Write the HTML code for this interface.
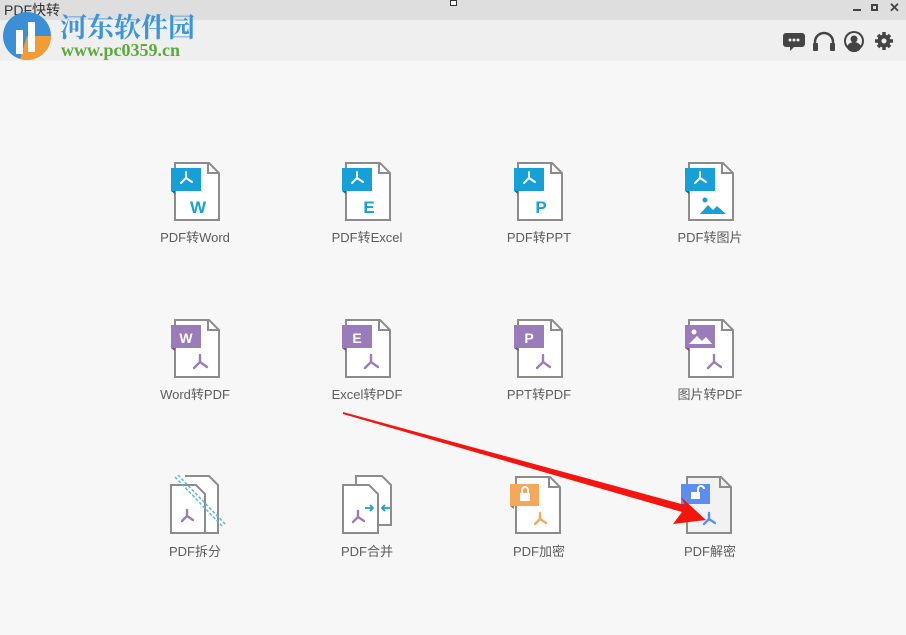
<!DOCTYPE html>
<html><head><meta charset="utf-8"><style>
body{margin:0;width:906px;height:635px;overflow:hidden;background:#f7f7f7;font-family:"Liberation Sans","Noto Sans CJK SC",sans-serif;position:relative}
.tb{position:absolute;left:0;top:0;width:906px;height:20px;background:#dedede}
.tool{position:absolute;left:0;top:20px;width:906px;height:41px;background:#efefef}
.it{position:absolute;width:60px;height:62px}
.lb{position:absolute;width:120px;text-align:center;font-size:13px;color:#5c5c5c}
</style></head><body>
<div class="tb"></div>
<div class="tool"></div>
<div style="position:absolute;left:4px;top:0;font-size:14px;color:#333">PDF快转</div>
<svg style="position:absolute;left:0;top:8px" width="60" height="55"><circle cx="27" cy="28" r="24" fill="#3a8fd6"/><path d="M27 28 L51 28 A24 24 0 0 1 20 51 Z" fill="#f39b35"/><rect x="16" y="22" width="7" height="24" fill="#fff"/><rect x="28" y="14" width="7" height="30" fill="#fff"/></svg>
<div style="position:absolute;left:60px;top:6px;font-size:27px;font-weight:bold;color:#3b95dc;font-family:'Liberation Serif','Noto Serif CJK SC',serif;letter-spacing:0px">河东软件园</div>
<div style="position:absolute;left:61px;top:40px;font-size:18px;font-weight:bold;color:#5aab3a;font-family:'Liberation Serif',serif">www.pc0359.cn</div>
<div style="position:absolute;left:853px;top:4px;width:8px;height:2px;background:#444;margin-top:5px"></div>
<div style="position:absolute;left:871px;top:4px;width:7px;height:7px;border:2px solid #444;box-sizing:border-box"></div>
<div style="position:absolute;left:889px;top:0;font-size:13px;font-weight:bold;color:#444">✕</div>
<div style="position:absolute;left:450px;top:0;width:5px;height:4px;border:1px solid #333;background:#fff"></div>
<svg style="position:absolute;left:783px;top:30px" width="112" height="24" fill="#444">
<path d="M3 3 h16 a3 3 0 0 1 3 3 v8 a3 3 0 0 1 -3 3 h-8 l-4 4 v-4 h-4 a3 3 0 0 1 -3 -3 v-8 a3 3 0 0 1 3 -3z"/>
<circle cx="7" cy="10" r="1.5" fill="#efefef"/><circle cx="11" cy="10" r="1.5" fill="#efefef"/><circle cx="15" cy="10" r="1.5" fill="#efefef"/>
<path d="M32 19 v-7 a9 9 0 0 1 18 0 v7" fill="none" stroke="#444" stroke-width="2.5"/><rect x="30" y="13" width="5" height="8" rx="1"/><rect x="47" y="13" width="5" height="8" rx="1"/>
<circle cx="71" cy="11" r="10"/><circle cx="71" cy="11" r="8" fill="#efefef"/><circle cx="71" cy="9" r="3.5"/><path d="M64 18 a7 6 0 0 1 14 0 a8 8 0 0 1 -14 0z"/>
<circle cx="101" cy="11" r="6.5"/><g stroke="#444" stroke-width="3.5"><line x1="101" y1="2" x2="101" y2="20"/><line x1="92" y1="11" x2="110" y2="11"/><line x1="95" y1="5" x2="107" y2="17"/><line x1="107" y1="5" x2="95" y2="17"/></g><circle cx="101" cy="11" r="2.5" fill="#efefef"/>
</svg>

<svg class="it" style="left:171px;top:162px"><path d="M4 1 h34 l10 10 v47 h-44z" fill="#fff" stroke="#8c8c8c" stroke-width="2"/><path d="M37 1 v10 h10" fill="none" stroke="#8c8c8c" stroke-width="2"/><rect x="0" y="6" width="30" height="23" fill="#17a0d8"/><path d="M0 29 h4 v3z" fill="#0e6f99"/><path d="M15 10 v6 l-5 5 M15 16 l6 4" stroke="#fff" stroke-width="2" fill="none" stroke-linecap="round"/><text x="27" y="51" text-anchor="middle" font-size="17" font-weight="bold" fill="#17a0d8" font-family="Liberation Sans">W</text></svg>
<div class="lb" style="left:135px;top:227px">PDF转Word</div>
<svg class="it" style="left:342px;top:162px"><path d="M4 1 h34 l10 10 v47 h-44z" fill="#fff" stroke="#8c8c8c" stroke-width="2"/><path d="M37 1 v10 h10" fill="none" stroke="#8c8c8c" stroke-width="2"/><rect x="0" y="6" width="30" height="23" fill="#17a0d8"/><path d="M0 29 h4 v3z" fill="#0e6f99"/><path d="M15 10 v6 l-5 5 M15 16 l6 4" stroke="#fff" stroke-width="2" fill="none" stroke-linecap="round"/><text x="27" y="51" text-anchor="middle" font-size="17" font-weight="bold" fill="#17a0d8" font-family="Liberation Sans">E</text></svg>
<div class="lb" style="left:307px;top:227px">PDF转Excel</div>
<svg class="it" style="left:514px;top:162px"><path d="M4 1 h34 l10 10 v47 h-44z" fill="#fff" stroke="#8c8c8c" stroke-width="2"/><path d="M37 1 v10 h10" fill="none" stroke="#8c8c8c" stroke-width="2"/><rect x="0" y="6" width="30" height="23" fill="#17a0d8"/><path d="M0 29 h4 v3z" fill="#0e6f99"/><path d="M15 10 v6 l-5 5 M15 16 l6 4" stroke="#fff" stroke-width="2" fill="none" stroke-linecap="round"/><text x="27" y="51" text-anchor="middle" font-size="17" font-weight="bold" fill="#17a0d8" font-family="Liberation Sans">P</text></svg>
<div class="lb" style="left:479px;top:227px">PDF转PPT</div>
<svg class="it" style="left:685px;top:162px"><path d="M4 1 h34 l10 10 v47 h-44z" fill="#fff" stroke="#8c8c8c" stroke-width="2"/><path d="M37 1 v10 h10" fill="none" stroke="#8c8c8c" stroke-width="2"/><rect x="0" y="6" width="30" height="23" fill="#17a0d8"/><path d="M0 29 h4 v3z" fill="#0e6f99"/><path d="M15 10 v6 l-5 5 M15 16 l6 4" stroke="#fff" stroke-width="2" fill="none" stroke-linecap="round"/><circle cx="20" cy="38" r="2.5" fill="#17a0d8"/><path d="M15 52 l8 -9 l5 5 l4 -4 l9 8z" fill="#17a0d8"/></svg>
<div class="lb" style="left:650px;top:227px">PDF转图片</div>

<svg class="it" style="left:171px;top:319px"><path d="M4 1 h34 l10 10 v47 h-44z" fill="#fff" stroke="#8c8c8c" stroke-width="2"/><path d="M37 1 v10 h10" fill="none" stroke="#8c8c8c" stroke-width="2"/><rect x="0" y="6" width="30" height="23" fill="#9b7cba"/><path d="M0 29 h4 v3z" fill="#6e4f8e"/><text x="15" y="24" text-anchor="middle" font-size="14" font-weight="bold" fill="#fff" font-family="Liberation Sans">W</text><path d="M29 36 v7 l-6 6 M29 43 l7 5" stroke="#9b7cba" stroke-width="2.4" fill="none" stroke-linecap="round"/></svg>
<div class="lb" style="left:135px;top:384px">Word转PDF</div>
<svg class="it" style="left:342px;top:319px"><path d="M4 1 h34 l10 10 v47 h-44z" fill="#fff" stroke="#8c8c8c" stroke-width="2"/><path d="M37 1 v10 h10" fill="none" stroke="#8c8c8c" stroke-width="2"/><rect x="0" y="6" width="30" height="23" fill="#9b7cba"/><path d="M0 29 h4 v3z" fill="#6e4f8e"/><text x="15" y="24" text-anchor="middle" font-size="14" font-weight="bold" fill="#fff" font-family="Liberation Sans">E</text><path d="M29 36 v7 l-6 6 M29 43 l7 5" stroke="#9b7cba" stroke-width="2.4" fill="none" stroke-linecap="round"/></svg>
<div class="lb" style="left:307px;top:384px">Excel转PDF</div>
<svg class="it" style="left:514px;top:319px"><path d="M4 1 h34 l10 10 v47 h-44z" fill="#fff" stroke="#8c8c8c" stroke-width="2"/><path d="M37 1 v10 h10" fill="none" stroke="#8c8c8c" stroke-width="2"/><rect x="0" y="6" width="30" height="23" fill="#9b7cba"/><path d="M0 29 h4 v3z" fill="#6e4f8e"/><text x="15" y="24" text-anchor="middle" font-size="14" font-weight="bold" fill="#fff" font-family="Liberation Sans">P</text><path d="M29 36 v7 l-6 6 M29 43 l7 5" stroke="#9b7cba" stroke-width="2.4" fill="none" stroke-linecap="round"/></svg>
<div class="lb" style="left:479px;top:384px">PPT转PDF</div>
<svg class="it" style="left:685px;top:319px"><path d="M4 1 h34 l10 10 v47 h-44z" fill="#fff" stroke="#8c8c8c" stroke-width="2"/><path d="M37 1 v10 h10" fill="none" stroke="#8c8c8c" stroke-width="2"/><rect x="0" y="6" width="30" height="23" fill="#9b7cba"/><path d="M0 29 h4 v3z" fill="#6e4f8e"/><circle cx="9" cy="13" r="2.5" fill="#fff"/><path d="M4 25 l8 -8 l5 5 l4 -4 l6 7z" fill="#fff"/><path d="M29 36 v7 l-6 6 M29 43 l7 5" stroke="#9b7cba" stroke-width="2.4" fill="none" stroke-linecap="round"/></svg>
<div class="lb" style="left:650px;top:384px">图片转PDF</div>

<svg class="it" style="left:168px;top:475px" width="60" height="62"><path d="M17 1 h24 l9 9 v48 h-12" fill="#fff" stroke="#8c8c8c" stroke-width="2"/><path d="M3 10 h25 l9 9 v39 h-34z" fill="#fff" stroke="#8c8c8c" stroke-width="2"/><line x1="7" y1="2" x2="55" y2="52" stroke="#5cb8e0" stroke-width="1.5" stroke-dasharray="3 2"/><line x1="10" y1="0" x2="58" y2="50" stroke="#5cb8e0" stroke-width="1.5" stroke-dasharray="3 2"/><path d="M19 35 v6 l-5 5 M19 41 l6 4" stroke="#9b7cba" stroke-width="2.4" fill="none" stroke-linecap="round"/></svg>
<div class="lb" style="left:135px;top:541px">PDF拆分</div>
<svg class="it" style="left:340px;top:475px" width="60" height="62"><path d="M16 1 h26 l9 9 v40 h-35z" fill="#fff" stroke="#8c8c8c" stroke-width="2"/><path d="M3 10 h26 l9 9 v39 h-35z" fill="#fff" stroke="#8c8c8c" stroke-width="2"/><path d="M18 36 v6 l-5 5 M18 42 l6 4" stroke="#9b7cba" stroke-width="2.4" fill="none" stroke-linecap="round"/><path d="M25 33 h8 M30 30 l3 3 l-3 3 M50 33 h-8 M45 30 l-3 3 l3 3" stroke="#17a0d8" stroke-width="1.8" fill="none"/></svg>
<div class="lb" style="left:307px;top:541px">PDF合并</div>
<svg class="it" style="left:510px;top:476px"><path d="M6 1 h34 l10 10 v46 h-44z" fill="#fff" stroke="#8c8c8c" stroke-width="2"/><path d="M39 1 v10 h10" fill="none" stroke="#8c8c8c" stroke-width="2"/><rect x="0" y="8" width="29" height="22" fill="#f5a85a"/><path d="M0 30 h4 v3z" fill="#b9742c"/><rect x="10" y="17" width="10" height="8" fill="#fff"/><path d="M12 17 v-3 a3 3 0 0 1 6 0 v3" stroke="#fff" stroke-width="2" fill="none"/><path d="M30 37 v6 l-5 5 M30 43 l6 4" stroke="#f5a85a" stroke-width="2.4" fill="none" stroke-linecap="round"/></svg>
<div class="lb" style="left:479px;top:541px">PDF加密</div>
<svg class="it" style="left:681px;top:476px"><path d="M6 1 h34 l10 10 v46 h-44z" fill="#f2f2f2" stroke="#8c8c8c" stroke-width="2"/><path d="M39 1 v10 h10" fill="none" stroke="#8c8c8c" stroke-width="2"/><rect x="0" y="8" width="29" height="20" fill="#5b8ef0"/><path d="M0 28 h4 v3z" fill="#2f5fb8"/><rect x="10" y="16" width="9" height="7" fill="#fff"/><path d="M17 16 v-3 a3 3 0 0 1 6 0" stroke="#fff" stroke-width="2" fill="none"/><path d="M28 37 v6 l-5 5 M28 43 l6 4" stroke="#5b8ef0" stroke-width="2.4" fill="none" stroke-linecap="round"/></svg>
<div class="lb" style="left:650px;top:541px">PDF解密</div>

<svg style="position:absolute;left:0;top:0" width="906" height="635"><polygon points="343,412 685,505 681,497 706,520 673,524 682,512 343,414" fill="#f5140e"/></svg>
</body></html>
